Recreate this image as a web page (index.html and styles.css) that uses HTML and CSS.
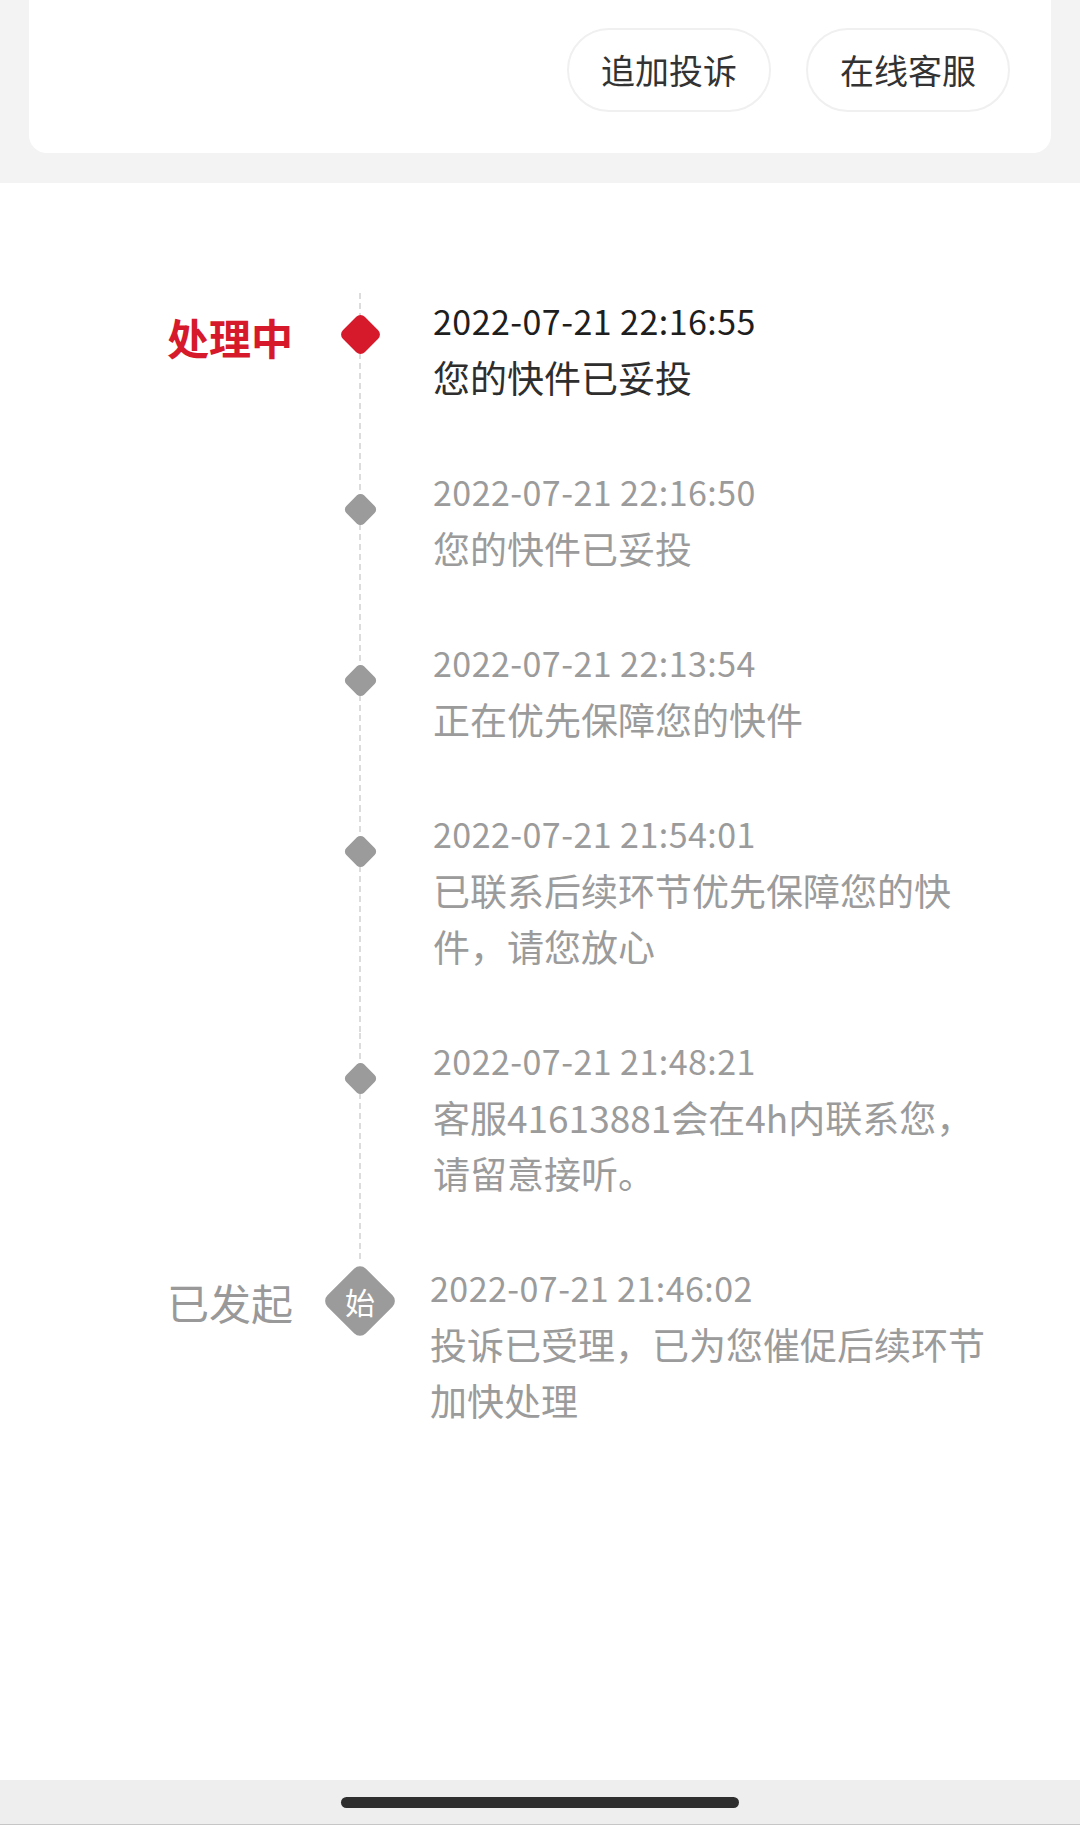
FILE: index.html
```html
<!DOCTYPE html>
<html lang="zh-CN">
<head>
    <meta charset="UTF-8">
    <meta name="viewport" content="width=device-width, initial-scale=1.0">
    <title>投诉进度</title>
    <link rel="stylesheet" href="styles.css">
</head>
<body>
    <div class="top">
        <div class="card">
            <button class="pill">追加投诉</button>
            <button class="pill">在线客服</button>
        </div>
    </div>

    <div class="timeline">
        <div class="item current">
            <div class="label">处理中</div>
            <div class="node"><span class="dot"></span></div>
            <div class="body">
                <div class="time">2022-07-21 22:16:55</div>
                <div class="text">您的快件已妥投</div>
            </div>
        </div>
        <div class="item">
            <div class="label"></div>
            <div class="node"><span class="dot"></span></div>
            <div class="body">
                <div class="time">2022-07-21 22:16:50</div>
                <div class="text">您的快件已妥投</div>
            </div>
        </div>
        <div class="item">
            <div class="label"></div>
            <div class="node"><span class="dot"></span></div>
            <div class="body">
                <div class="time">2022-07-21 22:13:54</div>
                <div class="text">正在优先保障您的快件</div>
            </div>
        </div>
        <div class="item">
            <div class="label"></div>
            <div class="node"><span class="dot"></span></div>
            <div class="body">
                <div class="time">2022-07-21 21:54:01</div>
                <div class="text">已联系后续环节优先保障您的快件，请您放心</div>
            </div>
        </div>
        <div class="item">
            <div class="label"></div>
            <div class="node"><span class="dot"></span></div>
            <div class="body">
                <div class="time">2022-07-21 21:48:21</div>
                <div class="text">客服41613881会在4h内联系您，请留意接听。</div>
            </div>
        </div>
        <div class="item start">
            <div class="label">已发起</div>
            <div class="node"><span class="dot"><span class="dot-text">始</span></span></div>
            <div class="body">
                <div class="time">2022-07-21 21:46:02</div>
                <div class="text">投诉已受理，已为您催促后续环节加快处理</div>
            </div>
        </div>
    </div>

    <div class="navbar">
        <span class="home-bar"></span>
    </div>
</body>
</html>
```

FILE: styles.css
```css
* {
    box-sizing: border-box;
}
body {
    margin: 0;
    min-height: 1825px;
    display: flex;
    flex-direction: column;
    background: #ffffff;
    font-family: "Noto Sans CJK SC", "Noto Sans", sans-serif;
    color: #333333;
}

/* top card with actions */
.top {
    background: #f3f3f3;
    padding: 0 29px 30px;
}
.card {
    background: #ffffff;
    border-radius: 0 0 18px 18px;
    padding: 28px 41px 41px;
    display: flex;
    justify-content: flex-end;
    gap: 35px;
}
.pill {
    height: 84px;
    padding: 0 32px;
    border: 2px solid #f0f0f0;
    border-radius: 42px;
    background: #ffffff;
    color: #333333;
    font-family: inherit;
    font-size: 34px;
    line-height: 1;
}

/* timeline */
.timeline {
    flex-grow: 1;
    padding-top: 110px;
}
.item {
    display: flex;
}
.label {
    width: 293px;
    flex-shrink: 0;
    text-align: right;
    font-size: 42px;
    line-height: 1;
    padding-top: 23px;
    color: #999999;
}
.current .label {
    color: #d61a2b;
    font-weight: bold;
}
.start .label {
    padding-top: 21px;
}
.node {
    width: 134px;
    flex-shrink: 0;
    display: flex;
    justify-content: center;
    align-items: flex-start;
    background-image: repeating-linear-gradient(to bottom, #dcdcdc 0 6px, transparent 6px 10px);
    background-size: 2px 100%;
    background-position: center top;
    background-repeat: no-repeat;
}
.start .node {
    background-size: 2px 0;
}
.dot {
    width: 25px;
    height: 25px;
    margin-top: 33px;
    background: #9b9b9b;
    border-radius: 5px;
    transform: rotate(45deg);
}
.current .dot {
    width: 31px;
    height: 31px;
    margin-top: 26px;
    background: #d61a2b;
    border-radius: 6px;
}
.start .dot {
    width: 54px;
    height: 54px;
    margin-top: 14px;
    border-radius: 8px;
    display: flex;
    justify-content: center;
    align-items: center;
}
.dot-text {
    transform: rotate(-45deg);
    color: #ffffff;
    font-size: 30px;
    line-height: 1;
}
.body {
    margin-left: 6px;
    width: 566px;
    padding-bottom: 59px;
    color: #9b9b9b;
}
.start .body {
    margin-left: 3px;
}
.time {
    font-size: 34px;
    letter-spacing: 0.45px;
    line-height: 56px;
}
.text {
    font-size: 37px;
    line-height: 56px;
}
.current .time {
    color: #1e1e1e;
}
.current .text {
    color: #2e2e2e;
}

/* system navigation bar */
.navbar {
    height: 45px;
    background: #eeeeee;
    border-bottom: 1px solid #c6c6c6;
    display: flex;
    justify-content: center;
    padding-top: 17px;
}
.home-bar {
    width: 398px;
    height: 11px;
    border-radius: 6px;
    background: #2e2e2e;
}
```
